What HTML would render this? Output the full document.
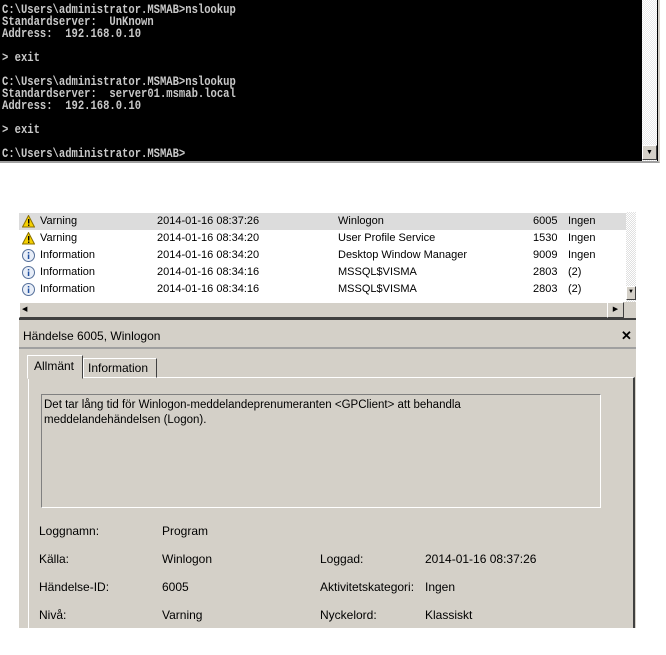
<!DOCTYPE html>
<html><head><meta charset="utf-8"><style>
*{margin:0;padding:0;box-sizing:border-box}
body{width:666px;height:655px;background:#fff;position:relative;overflow:hidden;font-family:"Liberation Sans",sans-serif}
.con{position:absolute;left:0;top:0;width:660px;height:163px;background:#000;border-right:2px solid #d4d0c8;border-bottom:2px solid #a0a0a0;overflow:hidden}
.con pre{position:absolute;left:2px;top:4px;color:#c8c8c8;font:bold 13px/12px "Liberation Mono",monospace;transform:scaleX(0.81);transform-origin:0 0}
.vs{position:absolute;left:642px;top:0;width:15px;height:161px;background:repeating-conic-gradient(#e8e8e8 0 25%,#fff 0 50%) 0 0/2px 2px}
.btn{position:absolute;background:#d4d0c8;border:1px solid;border-color:#fff #404040 #404040 #fff;font-size:7px;text-align:center;color:#000}
.list{position:absolute;left:19px;top:212px;width:617px;height:90px;background:#fff;font-size:11px;color:#000}
.row{position:absolute;left:0;width:607px;height:17px;line-height:17px;white-space:nowrap}
.row span{position:absolute}
.ic{position:absolute;left:3px;top:2px;width:13px;height:13px}
.lbl{position:absolute;font-size:12px;color:#000;white-space:nowrap}
</style></head><body>
<div class="con"><pre>C:\Users\administrator.MSMAB>nslookup
Standardserver:  UnKnown
Address:  192.168.0.10

> exit

C:\Users\administrator.MSMAB>nslookup
Standardserver:  server01.msmab.local
Address:  192.168.0.10

> exit

C:\Users\administrator.MSMAB></pre>
<div class="vs"></div>
<div class="btn" style="left:642px;top:145px;width:15px;height:15px;line-height:13px">▼</div>
</div>

<div class="list">
<div class="row" style="top:1px;background:#dcdcdc"></div>
<div style="position:absolute;left:607px;top:0;width:10px;height:90px;background:repeating-conic-gradient(#e0e0e0 0 25%,#fff 0 50%) 0 0/2px 2px"></div>
<div class="btn" style="left:607px;top:74px;width:10px;height:14px;line-height:10px;font-size:6px">▼</div>
</div>
<div style="position:absolute;left:19px;top:212px;width:607px;height:90px;font-size:11px">
<div class="row" style="top:1px"><svg class="ic" viewBox="0 0 13 13"><path d="M6.5 0.5L12.5 12H0.5Z" fill="#f5d000" stroke="#8a7000"/><rect x="6" y="4" width="1.4" height="4.5" fill="#000"/><rect x="6" y="9.5" width="1.4" height="1.4" fill="#000"/></svg><span style="left:21px">Varning</span><span style="left:138px">2014-01-16 08:37:26</span><span style="left:319px">Winlogon</span><span style="left:514px">6005</span><span style="left:549px">Ingen</span></div>
<div class="row" style="top:18px"><svg class="ic" viewBox="0 0 13 13"><path d="M6.5 0.5L12.5 12H0.5Z" fill="#f5d000" stroke="#8a7000"/><rect x="6" y="4" width="1.4" height="4.5" fill="#000"/><rect x="6" y="9.5" width="1.4" height="1.4" fill="#000"/></svg><span style="left:21px">Varning</span><span style="left:138px">2014-01-16 08:34:20</span><span style="left:319px">User Profile Service</span><span style="left:514px">1530</span><span style="left:549px">Ingen</span></div>
<div class="row" style="top:35px"><svg class="ic" viewBox="0 0 13 13"><circle cx="6.5" cy="6.5" r="6" fill="#e8eef8" stroke="#56709a"/><rect x="5.8" y="5.5" width="1.5" height="4.5" fill="#2050a0"/><rect x="5.8" y="3" width="1.5" height="1.5" fill="#2050a0"/></svg><span style="left:21px">Information</span><span style="left:138px">2014-01-16 08:34:20</span><span style="left:319px">Desktop Window Manager</span><span style="left:514px">9009</span><span style="left:549px">Ingen</span></div>
<div class="row" style="top:52px"><svg class="ic" viewBox="0 0 13 13"><circle cx="6.5" cy="6.5" r="6" fill="#e8eef8" stroke="#56709a"/><rect x="5.8" y="5.5" width="1.5" height="4.5" fill="#2050a0"/><rect x="5.8" y="3" width="1.5" height="1.5" fill="#2050a0"/></svg><span style="left:21px">Information</span><span style="left:138px">2014-01-16 08:34:16</span><span style="left:319px">MSSQL$VISMA</span><span style="left:514px">2803</span><span style="left:549px">(2)</span></div>
<div class="row" style="top:69px"><svg class="ic" viewBox="0 0 13 13"><circle cx="6.5" cy="6.5" r="6" fill="#e8eef8" stroke="#56709a"/><rect x="5.8" y="5.5" width="1.5" height="4.5" fill="#2050a0"/><rect x="5.8" y="3" width="1.5" height="1.5" fill="#2050a0"/></svg><span style="left:21px">Information</span><span style="left:138px">2014-01-16 08:34:16</span><span style="left:319px">MSSQL$VISMA</span><span style="left:514px">2803</span><span style="left:549px">(2)</span></div>
</div>
<div style="position:absolute;left:19px;top:302px;width:617px;height:16px;background:repeating-conic-gradient(#e0e0e0 0 25%,#fff 0 50%) 0 0/2px 2px"></div>
<div class="btn" style="left:19px;top:302px;width:589px;height:16px;line-height:14px;text-align:left;padding-left:2px;font-size:7px">◀</div>
<div class="btn" style="left:607px;top:302px;width:17px;height:16px;line-height:14px">▶</div>
<div style="position:absolute;left:624px;top:302px;width:12px;height:16px;background:#d4d0c8"></div>
<div style="position:absolute;left:19px;top:318px;width:617px;height:2px;background:#404040"></div>
<div style="position:absolute;left:19px;top:320px;width:617px;height:308px;background:#d4d0c8"></div>
<div style="position:absolute;left:19px;top:347px;width:617px;height:2px;background:#a0a0a0"></div>
<div class="lbl" style="left:23px;top:329px">Händelse 6005, Winlogon</div>
<div class="lbl" style="left:621px;top:328px;font-weight:bold;font-size:13px">✕</div>
<div style="position:absolute;left:28px;top:377px;width:607px;height:251px;border-top:1px solid #fff;border-left:1px solid #fff;border-right:2px solid #404040"></div>
<div style="position:absolute;left:27px;top:355px;width:56px;height:24px;background:#d4d0c8;border:1px solid;border-color:#fff #404040 transparent #fff"></div>
<div class="lbl" style="left:34px;top:359px">Allmänt</div>
<div style="position:absolute;left:83px;top:358px;width:74px;height:20px;border:1px solid;border-color:#fff #404040 transparent #fff"></div>
<div class="lbl" style="left:88px;top:361px">Information</div>
<div style="position:absolute;left:41px;top:394px;width:560px;height:114px;border:1px solid;border-color:#808080 #fff #fff #808080"></div>
<div class="lbl" style="left:44px;top:398px;line-height:15px;font-size:11.5px">Det tar lång tid för Winlogon-meddelandeprenumeranten &lt;GPClient&gt; att behandla<br>meddelandehändelsen (Logon).</div>
<div class="lbl" style="left:39px;top:524px">Loggnamn:</div><div class="lbl" style="left:162px;top:524px">Program</div>
<div class="lbl" style="left:39px;top:552px">Källa:</div><div class="lbl" style="left:162px;top:552px">Winlogon</div>
<div class="lbl" style="left:320px;top:552px">Loggad:</div><div class="lbl" style="left:425px;top:552px">2014-01-16 08:37:26</div>
<div class="lbl" style="left:39px;top:580px">Händelse-ID:</div><div class="lbl" style="left:162px;top:580px">6005</div>
<div class="lbl" style="left:320px;top:580px">Aktivitetskategori:</div><div class="lbl" style="left:425px;top:580px">Ingen</div>
<div class="lbl" style="left:39px;top:608px">Nivå:</div><div class="lbl" style="left:162px;top:608px">Varning</div>
<div class="lbl" style="left:320px;top:608px">Nyckelord:</div><div class="lbl" style="left:425px;top:608px">Klassiskt</div>
</body></html>
